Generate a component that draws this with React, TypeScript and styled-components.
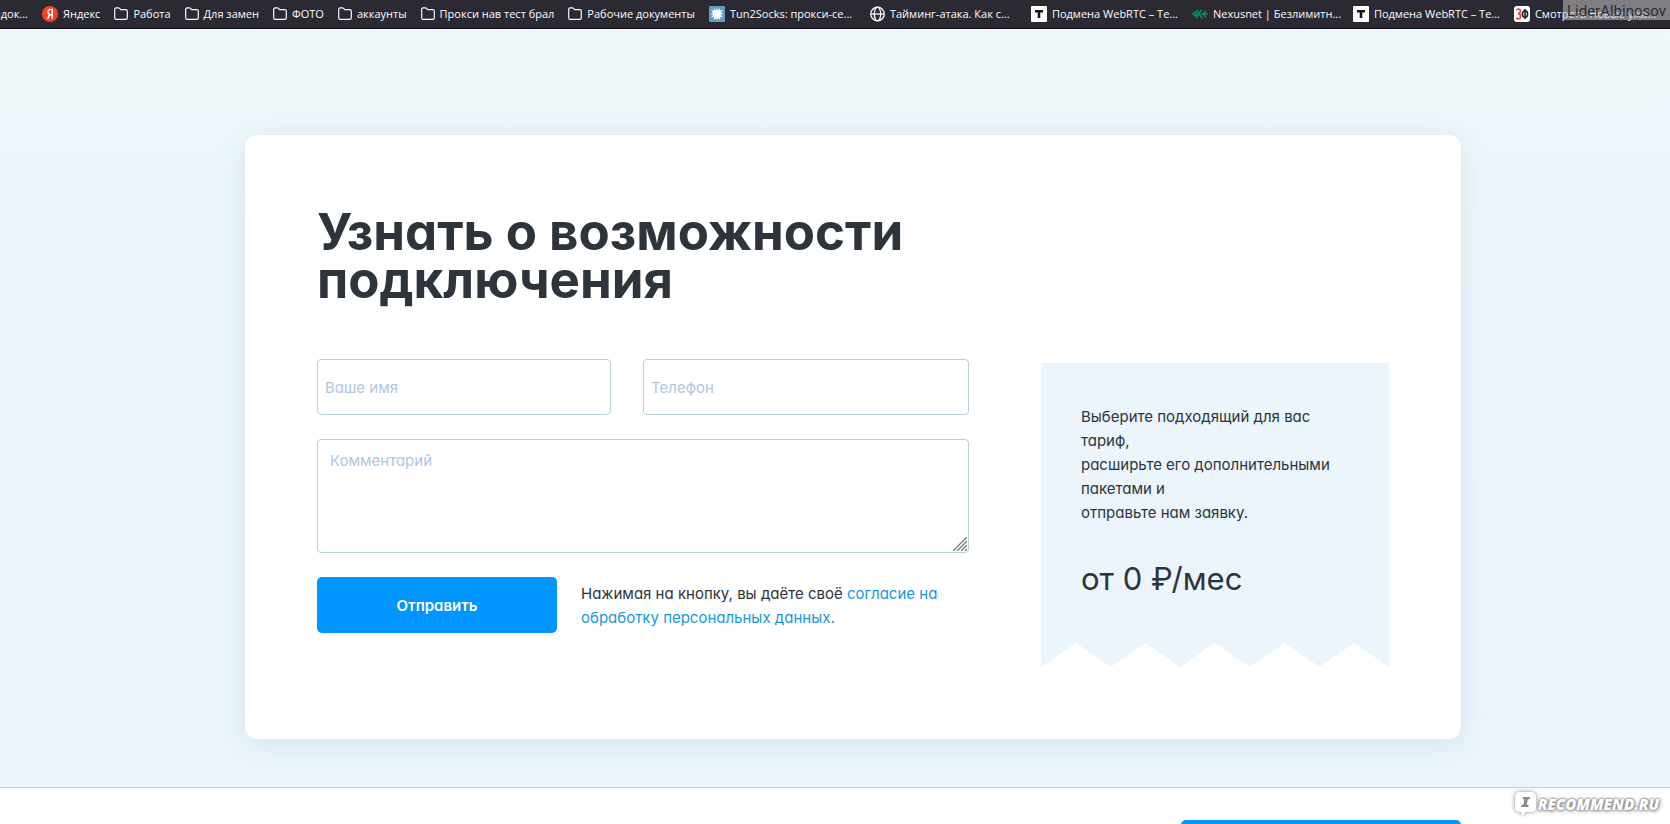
import React from "react";
import styled, { createGlobalStyle } from "styled-components";

const GlobalStyle = createGlobalStyle`
  *, *::before, *::after { box-sizing: border-box; }
  body {
    margin: 0;
    background: #fff;
    color: #2d343c;
    font: 400 15px/24px Inter, "Liberation Sans", sans-serif;
    font-feature-settings: "cv11";
  }
  input, textarea, button { font: inherit; font-feature-settings: inherit; }
`;

const Page = styled.div`
  position: relative;
  display: flex;
  flex-direction: column;
  height: 100vh;
  overflow: hidden;
`;

/* Bookmarks bar */

const BookmarksBar = styled.nav`
  display: flex;
  flex: none;
  align-items: center;
  gap: 14px;
  height: 29px;
  overflow: hidden;
  background: #2b2a33;
  border-bottom: 1px solid #0c0c12;
`;

const Bookmark = styled.a<{ $long?: boolean }>`
  display: flex;
  flex: none;
  align-items: center;
  gap: 5px;
  width: ${(p) => (p.$long ? "147px" : "auto")};
  color: #fbfbfe;
  font: 400 11px/16px "Open Sans", "Noto Sans", sans-serif;
  text-decoration: none;
  white-space: nowrap;
`;

const ClippedBookmark = styled(Bookmark)`
  justify-content: flex-end;
  width: 28px;
  overflow: hidden;
`;

const Icon = styled.svg`
  display: block;
  flex: none;
`;

/* Page section */

const Section = styled.main`
  flex: none;
  padding: 106px 24px 48px 60px;
  background: linear-gradient(#f0f8fb, #ebf5fa 25%, #ebf4fb);
  border-bottom: 1px solid #c6d6dd;
`;

const Card = styled.section`
  width: 100%;
  max-width: 1216px;
  margin: 0 auto;
  padding: 72px;
  background: #fff;
  border-radius: 12px;
  box-shadow: 0 4px 28px rgba(40, 140, 160, 0.13);
`;

const Title = styled.h1`
  max-width: 652px;
  margin: 0;
  padding: 1px 0 55px;
  font-size: 51px;
  line-height: 48px;
  font-weight: 700;
`;

const Columns = styled.div`
  display: flex;
  align-items: flex-start;
  gap: 72px;
`;

const Form = styled.form`
  display: flex;
  flex: 1;
  flex-direction: column;
  gap: 24px;
  min-width: 0;
`;

const FieldRow = styled.div`
  display: grid;
  grid-template-columns: 294fr 326fr;
  gap: 32px;
`;

const Field = styled.input`
  width: 100%;
  height: 56px;
  padding: 0 7px;
  background: #fff;
  border: 1px solid #b8d0d8;
  border-radius: 4px;
  &::placeholder { color: #afc7e2; opacity: 1; }
`;

const CommentBox = styled.div`
  position: relative;
`;

const Comment = styled.textarea`
  display: block;
  width: 100%;
  height: 114px;
  padding: 9px 12px;
  background: #fff;
  border: 1px solid #b8d0d8;
  border-radius: 4px;
  resize: vertical;
  &::placeholder { color: #afc7e2; opacity: 1; }
  &::-webkit-resizer { display: none; }
`;

const ResizeGrip = styled.svg`
  position: absolute;
  right: 2px;
  bottom: 2px;
  pointer-events: none;
`;

const SubmitRow = styled.div`
  display: flex;
  align-items: center;
  gap: 24px;
`;

const Button = styled.button`
  flex: none;
  width: 240px;
  height: 56px;
  padding: 2px 0 0;
  background: #0095ff;
  border: 0;
  border-radius: 5px;
  color: #fff;
  font-weight: 600;
  cursor: pointer;
`;

const Note = styled.p`
  max-width: 364px;
  margin: 0;
  padding-top: 2px;
`;

const TextLink = styled.a`
  color: #1897dc;
  text-decoration: none;
`;

const Ticket = styled.aside`
  flex: 0 0 348px;
  margin-top: 4px;
`;

const TicketBody = styled.div`
  padding: 42px 40px 44px;
  background: #ebf5fb;
`;

const TicketText = styled.p`
  margin: 0 0 34px;
`;

const Price = styled.p`
  margin: 0;
  font-size: 31px;
  line-height: 40px;
`;

const TornEdge = styled.svg`
  display: block;
  width: 100%;
  height: 24px;
`;

const Footer = styled.footer`
  flex: none;
  padding: 32px 24px 32px 60px;
`;

const FooterInner = styled.div`
  display: flex;
  justify-content: flex-end;
  width: 100%;
  max-width: 1216px;
  margin: 0 auto;
`;

const FooterButton = styled(Button)`
  width: 280px;
`;

/* Overlaid marks */

const AuthorMark = styled.div`
  position: absolute;
  top: 0;
  right: 0;
  height: 20px;
  padding: 0 4px;
  background: rgba(200, 200, 200, 0.54);
  color: #2e2d33;
  font: 400 15px/22px Roboto, sans-serif;
`;

const SiteMark = styled.div`
  position: absolute;
  right: 11px;
  bottom: 8px;
  display: flex;
  align-items: center;
  gap: 2px;
  color: #fff;
  font: italic 800 15px/24px "Open Sans", sans-serif;
  text-shadow: 0 0 2px #777, 0 0 3px #888, 1px 1px 4px #999;
`;

const MarkBubble = styled.svg`
  display: block;
  overflow: visible;
  filter: drop-shadow(0 0 2px #888);
`;

const FolderIcon = () => (
  <Icon width="14" height="14" viewBox="0 0 14 14" fill="none" stroke="#fbfbfe" strokeWidth="1.2">
    <path d="M.7 2.2Q.7.8 2.1.8h2.4Q5 .8 5.5 1.3L6.800 2.600h4.900q1.600 0 1.600 1.600v6.600q0 1.600-1.600 1.600H2.300Q.7 12.400.7 10.800z" />
  </Icon>
);

const YandexIcon = () => (
  <Icon width="16" height="16" viewBox="0 0 16 16">
    <circle cx="8" cy="8" r="8" fill="#f8421f" />
    <path d="M10.200 12.800V3.500H8.500C6.900 3.500 6 4.500 6 6c0 1.200.6 2 1.700 2.600L5.600 12.800M7.700 8.700h2.500" fill="none" stroke="#fff" strokeWidth="1.500" />
  </Icon>
);

const BurstIcon = () => (
  <Icon width="16" height="16" viewBox="0 0 16 16">
    <rect width="16" height="16" rx="1" fill="#5b9fc2" />
    <path d="M8 1.500l.8 3L11 2l-.2 2.800L14 4l-2 2.600 2.500 1L12 8.800l1.800 2.700-2.900-.7.500 3L9.200 12 8 14.500 7 12l-2.400 2 .5-3.200-3 .8L4 9 1.500 8l2.500-1.200L2.200 4l3 .8L4.600 2 7 4.500z" fill="#fff" />
  </Icon>
);

const GlobeIcon = () => (
  <Icon width="15" height="16" viewBox="0 0 15 16" fill="none" stroke="#fbfbfe" strokeWidth="1.300">
    <circle cx="7.500" cy="8" r="6.800" />
    <ellipse cx="7.500" cy="8" rx="3.200" ry="6.800" />
    <path d="M1 8h13" />
  </Icon>
);

const LetterTIcon = () => (
  <Icon width="16" height="16" viewBox="0 0 16 16">
    <rect width="16" height="16" rx="1" fill="#fff" />
    <path d="M4 4h8v2.400H9.300V12H6.700V6.400H4z" fill="#16161c" />
  </Icon>
);

const NexusIcon = () => (
  <Icon width="16" height="16" viewBox="0 0 16 16" fill="none" stroke="#138a5c" strokeWidth="1.500">
    <path d="M0 8h6M2 6.200h3M2 9.800h3M5 3.500l5 9M9.500 3.500l-5 9M9 8h7M11 8l3-3.200M11 8l3 3.200" />
  </Icon>
);

const FilmIcon = () => (
  <Icon width="16" height="16" viewBox="0 0 16 16" fill="none" strokeWidth="1.600">
    <rect width="16" height="16" rx="3" fill="#fff" />
    <path d="M2.300 4.200Q3 3 4.500 3 6.300 3 6.300 5.200 6.300 7.500 4 7.600q2.500.1 2.500 2.700Q6.500 13 4.400 13 2.800 13 2.200 11.600" stroke="#d8453f" />
    <ellipse cx="11" cy="8" rx="2.600" ry="3.300" stroke="#222" />
    <path d="M11 3v10" stroke="#222" />
  </Icon>
);

const bookmarks: { label: string; icon: () => React.JSX.Element; long?: boolean }[] = [
  { label: "Яндекс", icon: YandexIcon },
  { label: "Работа", icon: FolderIcon },
  { label: "Для замен", icon: FolderIcon },
  { label: "ФОТО", icon: FolderIcon },
  { label: "аккаунты", icon: FolderIcon },
  { label: "Прокси нав тест брал", icon: FolderIcon },
  { label: "Рабочие документы", icon: FolderIcon },
  { label: "Tun2Socks: прокси-се...", icon: BurstIcon, long: true },
  { label: "Тайминг-атака. Как с...", icon: GlobeIcon, long: true },
  { label: "Подмена WebRTC – Te...", icon: LetterTIcon, long: true },
  { label: "Nexusnet | Безлимитн...", icon: NexusIcon, long: true },
  { label: "Подмена WebRTC – Te...", icon: LetterTIcon, long: true },
  { label: "Смотреть Новые ужа...", icon: FilmIcon, long: true },
];

export default function App() {
  return (
    <Page>
      <GlobalStyle />
      <BookmarksBar aria-label="Закладки">
        <ClippedBookmark href="#">адок...</ClippedBookmark>
        {bookmarks.map(({ label, icon: Glyph, long }, i) => (
          <Bookmark key={i} href="#" $long={long}>
            <Glyph />
            {label}
          </Bookmark>
        ))}
      </BookmarksBar>

      <Section>
        <Card>
          <Title>Узнать о возможности подключения</Title>
          <Columns>
            <Form onSubmit={(e) => e.preventDefault()}>
              <FieldRow>
                <Field type="text" placeholder="Ваше имя" aria-label="Ваше имя" />
                <Field type="tel" placeholder="Телефон" aria-label="Телефон" />
              </FieldRow>
              <CommentBox>
                <Comment placeholder="Комментарий" aria-label="Комментарий" />
                <ResizeGrip width="14" height="14" viewBox="0 0 14 14" aria-hidden="true">
                  <path d="M0 14L14 0M4 14L14 4M8 14l6-6M12 14l2-2" stroke="#777" strokeWidth="1.300" />
                </ResizeGrip>
              </CommentBox>
              <SubmitRow>
                <Button type="submit">Отправить</Button>
                <Note>
                  Нажимая на кнопку, вы даёте своё{" "}
                  <TextLink href="#">согласие на обработку персональных данных.</TextLink>
                </Note>
              </SubmitRow>
            </Form>
            <Ticket>
              <TicketBody>
                <TicketText>
                  Выберите подходящий для вас
                  <br />
                  тариф,
                  <br />
                  расширьте его дополнительными
                  <br />
                  пакетами и
                  <br />
                  отправьте нам заявку.
                </TicketText>
                <Price>от 0 ₽/мес</Price>
              </TicketBody>
              <TornEdge viewBox="0 0 10 1" preserveAspectRatio="none" aria-hidden="true">
                <path d="M0 0H10V1L9 0 8 1 7 0 6 1 5 0 4 1 3 0 2 1 1 0 0 1z" fill="#ebf5fb" />
              </TornEdge>
            </Ticket>
          </Columns>
        </Card>
      </Section>

      <Footer>
        <FooterInner>
          <FooterButton type="button" aria-label="Подключить" />
        </FooterInner>
      </Footer>

      <AuthorMark>LiderAlbinosov</AuthorMark>
      <SiteMark>
        <MarkBubble width="21" height="24" viewBox="0 0 21 24">
          <path d="M5 0h11q5 0 5 5v10q0 5-5 5h-5l-4.500 4 .3-4H5q-5 0-5-5V5q0-5 5-5z" fill="#fff" />
          <path d="M8 5h7l-.4 2.200h-1.800l-1 5.600h1.800l-.4 2.200H6.200l.4-2.200h1.800l1-5.600H7.600z" fill="#8b8b8b" />
        </MarkBubble>
        RECOMMEND.RU
      </SiteMark>
    </Page>
  );
}
